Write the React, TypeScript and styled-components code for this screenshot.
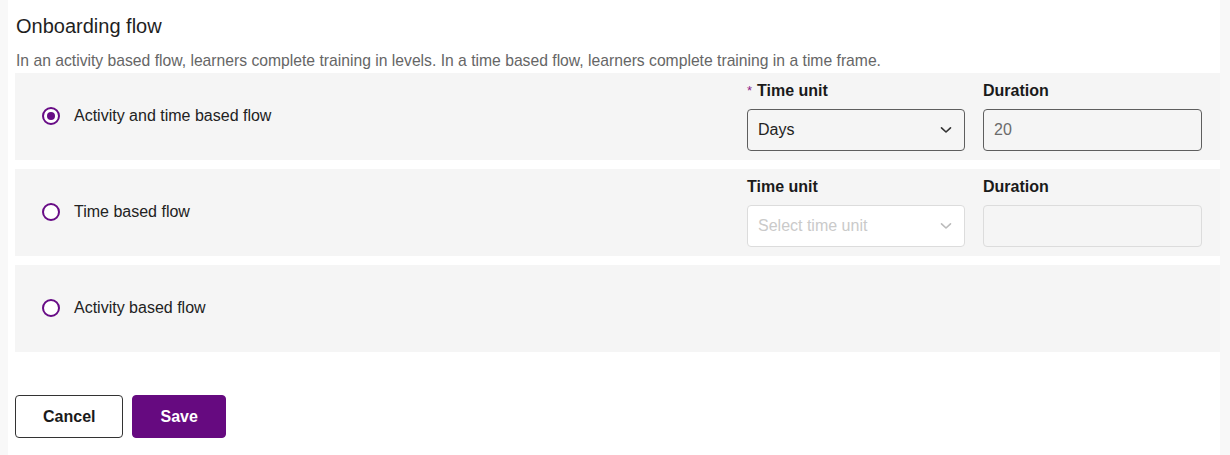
import React from "react";
import styled, { createGlobalStyle } from "styled-components";

const GlobalStyle = createGlobalStyle`
  html, body { margin: 0; padding: 0; background: #f8f8f8; }
  body { font-family: "Liberation Sans", Arial, sans-serif; color: #222; }
  * { box-sizing: border-box; }
`;

const Page = styled.div`
  margin: 0 10px 0 8px;
  background: #fff;
  min-height: 455px;
  padding: 14px 0 0 7px;
`;

const Title = styled.h2`
  margin: 0 0 0 1px;
  font-size: 20px;
  line-height: 24px;
  font-weight: 400;
  color: #1f1f1f;
`;

const Description = styled.p`
  margin: 14px 0 3px 1px;
  font-size: 15.7px;
  line-height: 18px;
  color: #666;
`;

const Options = styled.div`
  display: flex;
  flex-direction: column;
  gap: 9px;
`;

const Panel = styled.div`
  display: flex;
  align-items: center;
  justify-content: space-between;
  background: #f5f5f5;
  min-height: 87px;
  padding: 8px 18px 9px 27px;
`;

const RadioLabel = styled.label`
  display: flex;
  align-items: center;
  gap: 14px;
  font-size: 16px;
  color: #222;
  cursor: pointer;
`;

const RadioCircle = styled.span<{ $checked?: boolean }>`
  width: 18px;
  height: 18px;
  border-radius: 50%;
  border: 2px solid #680c86;
  background: #fff;
  display: flex;
  align-items: center;
  justify-content: center;
  &::after {
    content: "";
    width: 8px;
    height: 8px;
    border-radius: 50%;
    background: ${(p) => (p.$checked ? "#680c86" : "transparent")};
  }
`;

const Fields = styled.div`
  display: grid;
  grid-template-columns: 218px 219px;
  column-gap: 18px;
`;

const Field = styled.div`
  display: flex;
  flex-direction: column;
`;

const FieldLabel = styled.div`
  font-size: 16px;
  font-weight: 700;
  line-height: 20px;
  margin-bottom: 8px;
  color: #1a1a1a;
`;

const Required = styled.span`
  color: #8a1f8a;
  font-weight: 400;
  font-size: 13px;
  vertical-align: top;
  margin-right: 5px;
`;

const SelectBox = styled.div<{ $disabled?: boolean }>`
  height: 42px;
  border: 1px solid ${(p) => (p.$disabled ? "#dcdcdc" : "#5e5e5e")};
  border-radius: 4px;
  background: ${(p) => (p.$disabled ? "#fff" : "#f5f5f5")};
  display: flex;
  align-items: center;
  justify-content: space-between;
  padding: 0 12px 0 10px;
  font-size: 16px;
  color: ${(p) => (p.$disabled ? "#cacaca" : "#222")};
`;

const InputBox = styled.div<{ $disabled?: boolean }>`
  height: 42px;
  border: 1px solid ${(p) => (p.$disabled ? "#dcdcdc" : "#5e5e5e")};
  border-radius: 4px;
  background: #f5f5f5;
  display: flex;
  align-items: center;
  padding: 0 10px;
  font-size: 16px;
  color: #6b6b6b;
`;

const Actions = styled.div`
  display: flex;
  gap: 9px;
  margin-top: 43px;
`;

const Button = styled.button<{ $primary?: boolean }>`
  height: 43px;
  padding: 0 27px;
  border-radius: 4px;
  font-family: "Liberation Sans", Arial, sans-serif;
  font-size: 16px;
  font-weight: 700;
  cursor: pointer;
  border: 1px solid ${(p) => (p.$primary ? "#660a80" : "#333")};
  background: ${(p) => (p.$primary ? "#660a80" : "#fff")};
  color: ${(p) => (p.$primary ? "#fff" : "#1a1a1a")};
`;

const Chevron = ({ color }: { color: string }) => (
  <svg width="12" height="8" viewBox="0 0 12 8" fill="none">
    <path d="M1.5 1.8 L6 6 L10.5 1.8" stroke={color} strokeWidth="1.6" strokeLinecap="round" strokeLinejoin="round" />
  </svg>
);

export default function App() {
  return (
    <>
      <GlobalStyle />
      <Page>
        <Title>Onboarding flow</Title>
        <Description>
          In an activity based flow, learners complete training in levels. In a time based flow, learners complete training in a time frame.
        </Description>
        <Options>
          <Panel>
            <RadioLabel>
              <RadioCircle $checked />
              Activity and time based flow
            </RadioLabel>
            <Fields>
              <Field>
                <FieldLabel>
                  <Required>*</Required>Time unit
                </FieldLabel>
                <SelectBox>
                  Days
                  <Chevron color="#333" />
                </SelectBox>
              </Field>
              <Field>
                <FieldLabel>Duration</FieldLabel>
                <InputBox>20</InputBox>
              </Field>
            </Fields>
          </Panel>
          <Panel>
            <RadioLabel>
              <RadioCircle />
              Time based flow
            </RadioLabel>
            <Fields>
              <Field>
                <FieldLabel>Time unit</FieldLabel>
                <SelectBox $disabled>
                  Select time unit
                  <Chevron color="#bbb" />
                </SelectBox>
              </Field>
              <Field>
                <FieldLabel>Duration</FieldLabel>
                <InputBox $disabled />
              </Field>
            </Fields>
          </Panel>
          <Panel>
            <RadioLabel>
              <RadioCircle />
              Activity based flow
            </RadioLabel>
          </Panel>
        </Options>
        <Actions>
          <Button>Cancel</Button>
          <Button $primary>Save</Button>
        </Actions>
      </Page>
    </>
  );
}
